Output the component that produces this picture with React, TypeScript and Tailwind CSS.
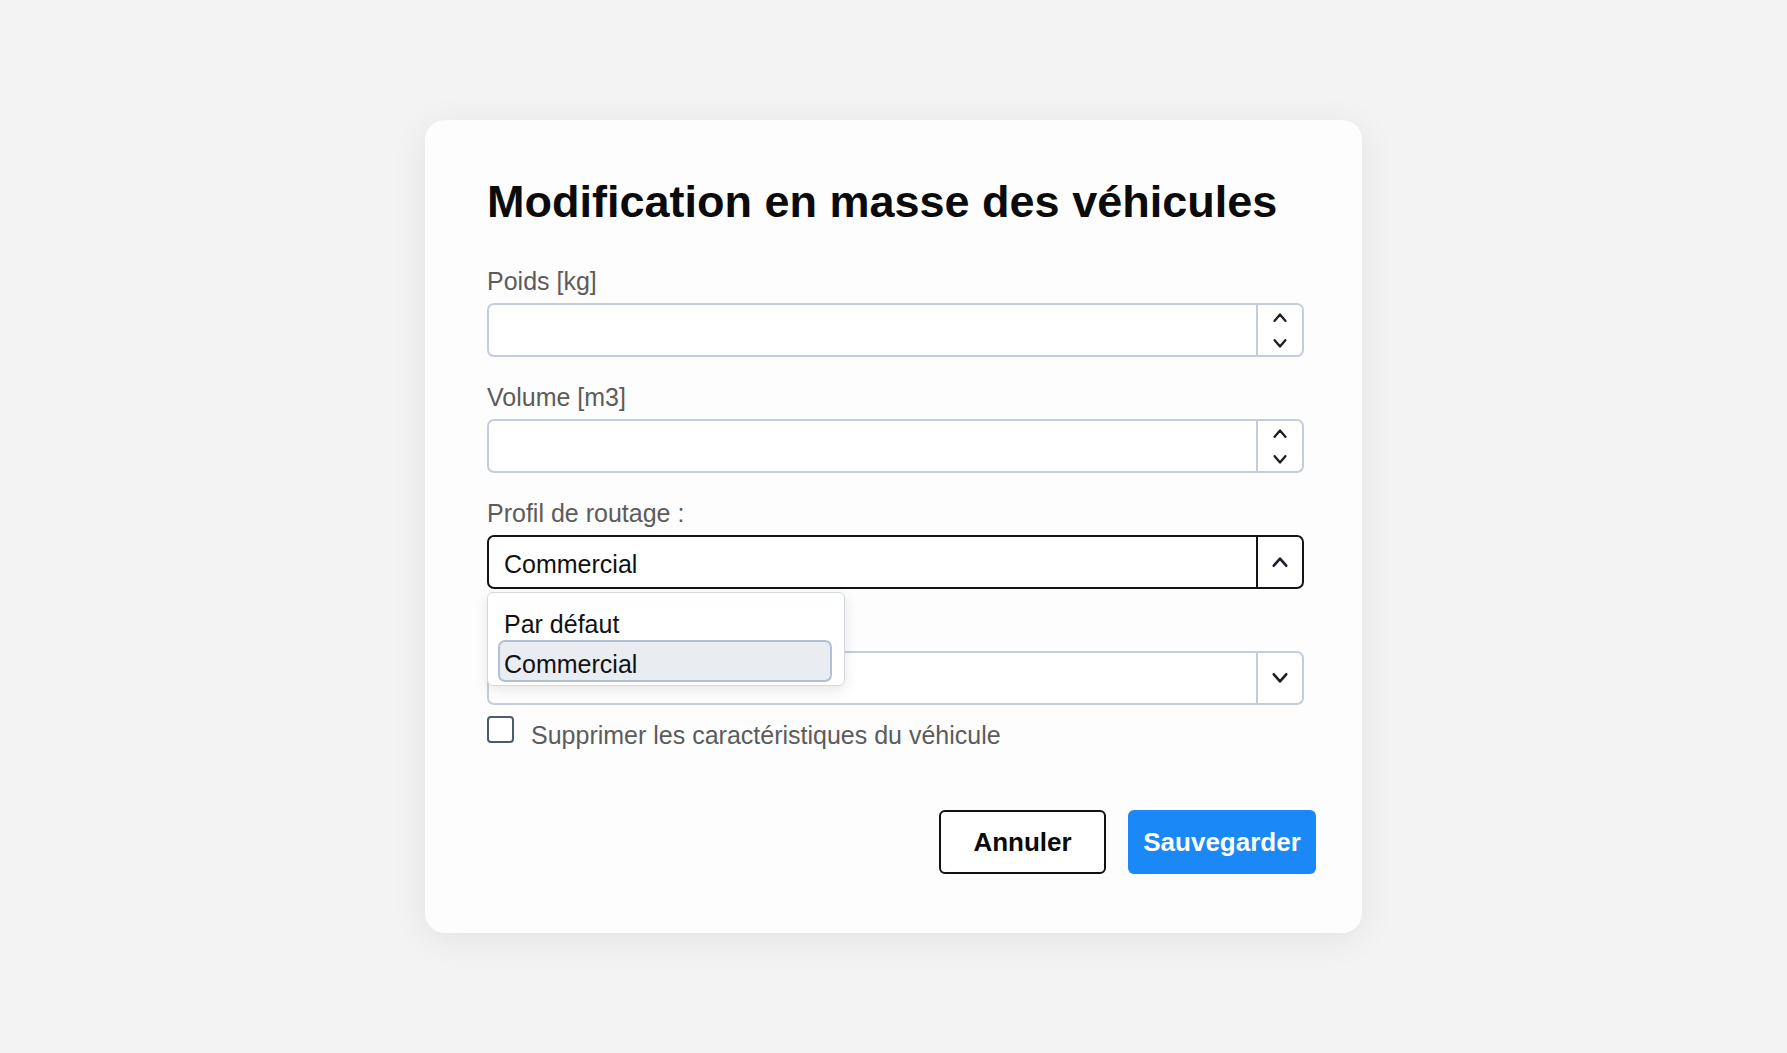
import React from "react";

const ChevronUp = ({ w = 14, h = 8, sw = 2.4 }: { w?: number; h?: number; sw?: number }) => (
  <svg width={w} height={h} viewBox={`0 0 ${w} ${h}`} fill="none">
    <polyline
      points={`${sw / 2 + 0.5},${h - sw / 2} ${w / 2},${sw / 2 + 0.3} ${w - sw / 2 - 0.5},${h - sw / 2}`}
      stroke="#1a1f29"
      strokeWidth={sw}
      strokeLinecap="round"
      strokeLinejoin="round"
    />
  </svg>
);

const ChevronDown = ({ w = 14, h = 8, sw = 2.4 }: { w?: number; h?: number; sw?: number }) => (
  <svg width={w} height={h} viewBox={`0 0 ${w} ${h}`} fill="none">
    <polyline
      points={`${sw / 2 + 0.5},${sw / 2} ${w / 2},${h - sw / 2 - 0.3} ${w - sw / 2 - 0.5},${sw / 2}`}
      stroke="#1a1f29"
      strokeWidth={sw}
      strokeLinecap="round"
      strokeLinejoin="round"
    />
  </svg>
);

function NumberField({ label }: { label: string }) {
  return (
    <div className="flex flex-col">
      <label className="text-[25px] leading-[30px] text-[#5c5c5c]">{label}</label>
      <div className="mt-[7px] flex h-[54px] w-full rounded-[7px] border-2 border-[#c3cddb] bg-white">
        <div className="flex-1" />
        <div className="flex w-[46px] flex-col items-center justify-center gap-[17px] border-l-2 border-[#c3cddb]">
          <ChevronUp w={14} h={9} sw={2.3} />
          <ChevronDown w={14} h={9} sw={2.3} />
        </div>
      </div>
    </div>
  );
}

export default function App() {
  return (
    <div className="flex h-screen w-full items-center justify-center bg-[#f3f3f3] font-['Liberation_Sans',Arial,sans-serif]">
      <div className="h-[813px] w-[937px] rounded-[20px] bg-[#fdfdfd] pl-[62px] pr-[46px] pt-[56px] shadow-[0_6px_36px_rgba(0,0,0,0.07)]">
        <h1 className="text-[45px] font-bold leading-[52px] text-[#0b0b0b]">
          Modification en masse des véhicules
        </h1>

        <div className="mt-[38px] flex w-[817px] flex-col gap-[25px]">
          <NumberField label="Poids [kg]" />
          <NumberField label="Volume [m3]" />

          <div className="flex flex-col">
            <label className="text-[25px] leading-[30px] text-[#5c5c5c]">Profil de routage :</label>
            <div className="relative mt-[7px]">
              <div className="flex h-[54px] w-full rounded-[7px] border-2 border-[#141414] bg-white">
                <div className="flex flex-1 items-center pl-[15px] pt-[6px] text-[25px] text-[#111]">Commercial</div>
                <div className="flex w-[46px] items-center justify-center border-l-2 border-[#141414]">
                  <ChevronUp w={16} h={10} sw={2.6} />
                </div>
              </div>
              <div className="absolute left-0 top-[calc(100%+3px)] z-10 h-[94px] w-[358px] rounded-[6px] border border-[#d3d8df] bg-white shadow-[0_4px_14px_rgba(0,0,0,0.10)]">
                <div className="pl-[16px] pt-[16px] text-[25px] leading-[30px] text-[#111]">Par défaut</div>
                <div className="ml-[10px] mt-[1px] flex h-[42px] w-[334px] items-center rounded-[7px] border-2 border-[#b3c0d1] bg-[#e9edf2] pl-[4px] pt-[5px] text-[25px] leading-[30px] text-[#111]">
                  Commercial
                </div>
              </div>
            </div>
          </div>

          <div className="flex flex-col">
            <div className="h-[30px]" />
            <div className="mt-[7px] flex h-[54px] w-full rounded-[7px] border-2 border-[#c3cddb] bg-white">
              <div className="flex-1" />
              <div className="flex w-[46px] items-center justify-center border-l-2 border-[#c3cddb]">
                <ChevronDown w={16} h={10} sw={2.6} />
              </div>
            </div>
          </div>
        </div>

        <div className="mt-[9px] flex items-start">
          <div className="mt-[2px] h-[27px] w-[27px] rounded-[4px] border-2 border-[#4b5b72] bg-white" />
          <span className="ml-[17px] mt-[6px] text-[25px] leading-[30px] text-[#5c5c5c]">
            Supprimer les caractéristiques du véhicule
          </span>
        </div>

        <div className="mt-[60px] flex justify-end gap-[22px]">
          <button className="flex h-[64px] w-[167px] items-center justify-center rounded-[6px] border-2 border-[#111] bg-white text-[26px] font-bold text-[#0b0b0b]">
            Annuler
          </button>
          <button className="flex h-[64px] w-[188px] items-center justify-center rounded-[6px] bg-[#1b88f7] text-[26px] font-bold text-white">
            Sauvegarder
          </button>
        </div>
      </div>
    </div>
  );
}
